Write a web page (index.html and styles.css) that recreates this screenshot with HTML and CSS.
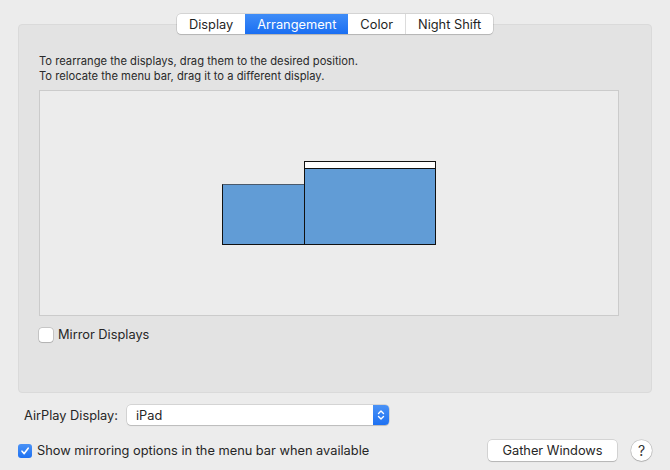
FILE: index.html
```html
<!DOCTYPE html>
<html lang="en">
<head>
    <meta charset="UTF-8">
    <title>Displays</title>
    <link rel="stylesheet" href="styles.css">
</head>
<body>
    <div class="janela">
        <div class="painel">
            <div class="abas">
                <span class="aba">Display</span>
                <span class="aba ativa">Arrangement</span>
                <span class="aba">Color</span>
                <span class="aba">Night Shift</span>
            </div>
            <p class="dica">To rearrange the displays, drag them to the desired position.<br>To relocate the menu bar, drag it to a different display.</p>
            <div class="arranjo">
                <div class="telas">
                    <div class="tela menor"></div>
                    <div class="tela maior"><div class="barra"></div></div>
                </div>
            </div>
            <label class="opcao espelho">
                <span class="caixa"></span>
                Mirror Displays
            </label>
        </div>

        <div class="linha airplay">
            <span class="rotulo">AirPlay Display:</span>
            <div class="seletor">
                <span>iPad</span>
                <span class="setas">
                    <svg width="8" height="12" viewBox="0 0 8 12"><path d="M1.5 4.5 L4 2 L6.5 4.5 M1.5 7.5 L4 10 L6.5 7.5" fill="none" stroke="#fff" stroke-width="1.4" stroke-linecap="round" stroke-linejoin="round"/></svg>
                </span>
            </div>
        </div>

        <div class="linha rodape">
            <label class="opcao">
                <span class="caixa marcada">
                    <svg width="10" height="10" viewBox="0 0 10 10"><path d="M2 5.2 L4.2 7.6 L8.2 2.2" fill="none" stroke="#fff" stroke-width="1.6" stroke-linecap="round" stroke-linejoin="round"/></svg>
                </span>
                Show mirroring options in the menu bar when available
            </label>
            <button class="botao">Gather Windows</button>
            <button class="ajuda">?</button>
        </div>
    </div>
</body>
</html>
```

FILE: styles.css
```css
body {
    margin: 0;
    background-color: #ececec;
    font-family: "Inter", "Liberation Sans", sans-serif;
    font-size: 12.8px;
    color: #262626;
}

.janela {
    width: 670px;
    height: 470px;
    padding: 24px 18px 0 18px;
    box-sizing: border-box;
}

.painel {
    position: relative;
    height: 369px;
    background-color: #e3e3e3;
    border: 1px solid #dadada;
    border-radius: 4px;
    box-sizing: border-box;
    padding: 29px 32px 0 20px;
}

.abas {
    position: absolute;
    top: -11px;
    left: 158px;
    display: flex;
    background-color: #fff;
    border-radius: 4px;
    box-shadow: 0 0 0 0.5px rgba(0, 0, 0, 0.2), 0 1px 1px rgba(0, 0, 0, 0.12);
    height: 20px;
    overflow: hidden;
}

.aba {
    display: flex;
    align-items: center;
    justify-content: center;
    color: #1f1f1f;
    border-left: 1px solid #dcdcdc;
    padding: 0 12px;
}

.aba:first-child {
    border-left: none;
}

.aba.ativa {
    background: linear-gradient(#3f8cf7, #1a6ef2);
    color: #fff;
    border-left: none;
}

.aba.ativa + .aba {
    border-left: none;
}

.dica {
    margin: 0 0 6px 0;
    font-size: 11.2px;
    line-height: 15px;
    color: #2a2a2a;
}

.arranjo {
    height: 226px;
    background-color: #ececec;
    border: 1px solid #cbcbcb;
    box-sizing: border-box;
    display: flex;
    justify-content: center;
    padding-top: 70px;
}

.telas {
    display: flex;
    align-items: flex-end;
    height: 84px;
    margin-left: 0;
}

.tela {
    background-color: #619cd6;
    border: 1.5px solid #111;
    box-sizing: border-box;
}

.menor {
    width: 82px;
    height: 61px;
    border-top-color: #4a5a6c;
    border-right: none;
}

.maior {
    width: 132px;
    height: 84px;
}

.barra {
    height: 6px;
    background-color: #fff;
    border-bottom: 1.5px solid #111;
}

.opcao {
    display: flex;
    align-items: center;
    gap: 5px;
}

.espelho {
    margin-top: 11px;
}

.caixa {
    width: 14px;
    height: 14px;
    box-sizing: border-box;
    background-color: #fff;
    border-radius: 3px;
    box-shadow: 0 0 0 0.5px rgba(0, 0, 0, 0.25), 0 1px 1px rgba(0, 0, 0, 0.1);
    display: flex;
    align-items: center;
    justify-content: center;
}

.caixa.marcada {
    background: linear-gradient(#4a92f6, #1e71f2);
    box-shadow: none;
}

.linha {
    display: flex;
    align-items: center;
}

.airplay {
    margin-top: 12px;
    padding-left: 6px;
    gap: 9px;
}

.seletor {
    width: 262px;
    height: 20px;
    background-color: #fff;
    border-radius: 4px;
    box-shadow: 0 0 0 0.5px rgba(0, 0, 0, 0.2), 0 1px 1px rgba(0, 0, 0, 0.12);
    display: flex;
    align-items: center;
    justify-content: space-between;
    padding-left: 9px;
    box-sizing: border-box;
    overflow: hidden;
}

.setas {
    width: 16px;
    height: 20px;
    background: linear-gradient(#4a92f6, #1e71f2);
    display: flex;
    align-items: center;
    justify-content: center;
}

.rodape {
    margin-top: 15px;
    padding-left: 0;
}

.botao {
    margin-left: auto;
    width: 129px;
    height: 21px;
    background-color: #fff;
    border: none;
    border-radius: 4px;
    box-shadow: 0 0 0 0.5px rgba(0, 0, 0, 0.2), 0 1px 1px rgba(0, 0, 0, 0.15);
    font-family: inherit;
    font-size: 12.8px;
    color: #262626;
    padding: 0;
}

.ajuda {
    margin-left: 14px;
    width: 21px;
    height: 21px;
    border-radius: 50%;
    background-color: #fff;
    border: none;
    box-shadow: 0 0 0 0.5px rgba(0, 0, 0, 0.2), 0 1px 1px rgba(0, 0, 0, 0.15);
    font-family: inherit;
    font-size: 14px;
    color: #333;
    padding: 0;
}
```
